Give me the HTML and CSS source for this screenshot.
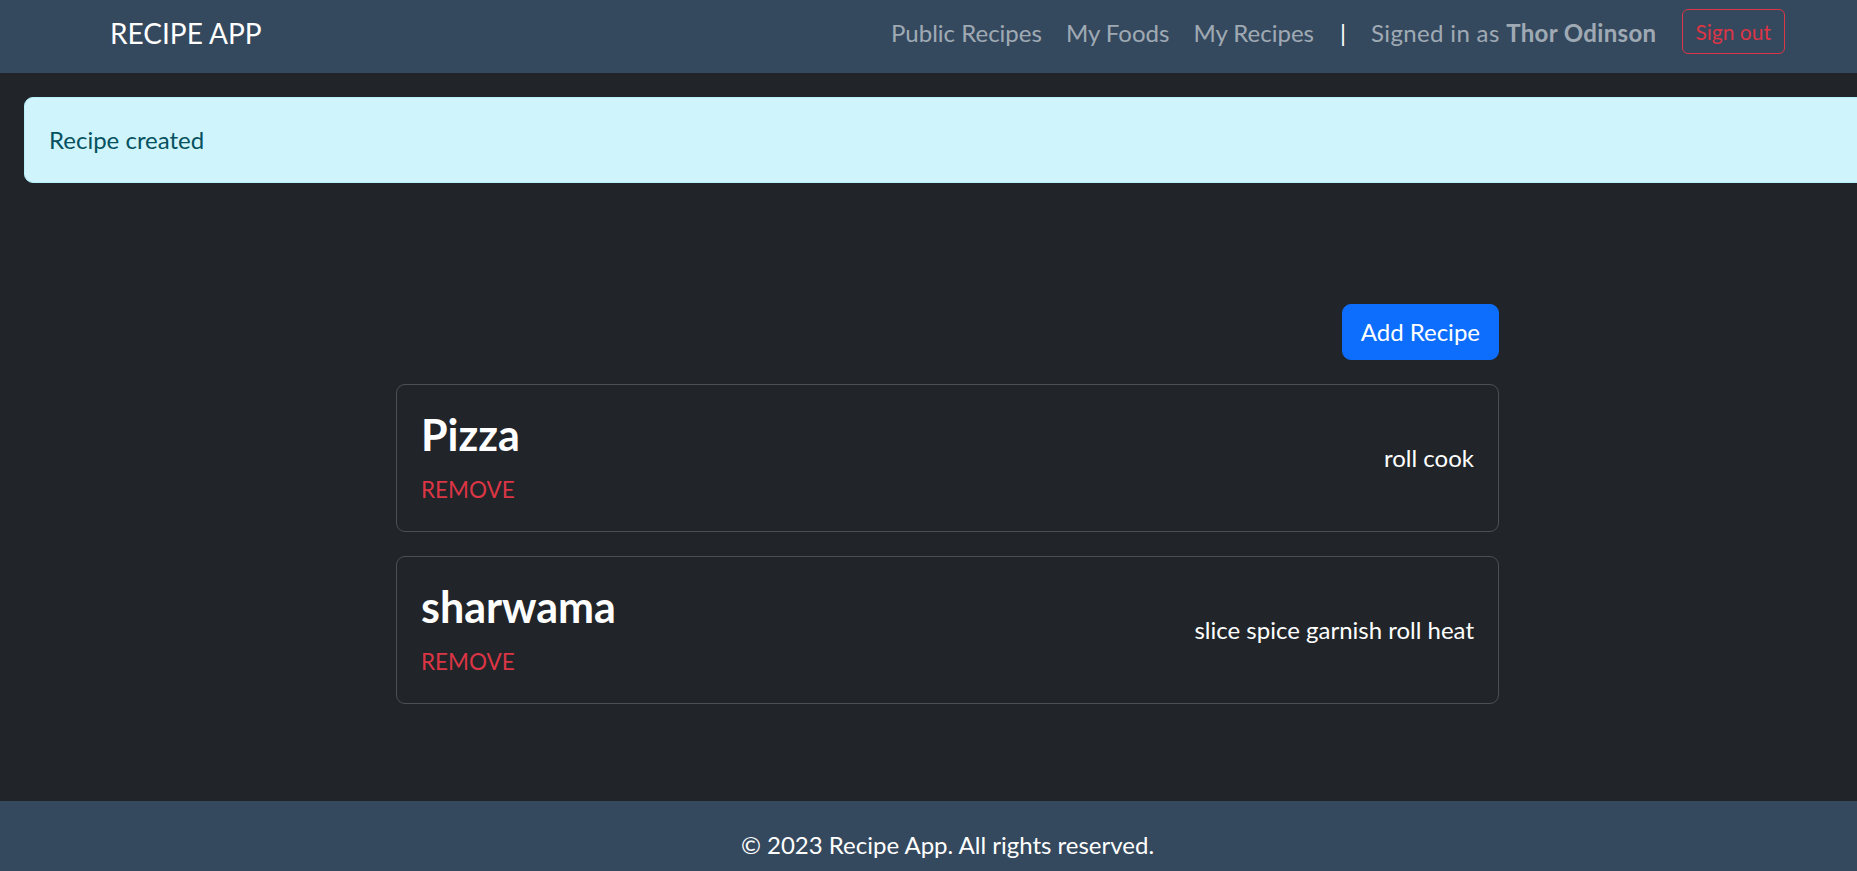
FILE: index.html
```html
<!DOCTYPE html>
<html lang="en">
<head>
<meta charset="utf-8">
<title>Recipe App</title>
<link rel="stylesheet" href="styles.css">
</head>
<body>
<div class="page">
  <header class="navbar">
    <a class="brand" href="#">RECIPE APP</a>
    <nav class="nav-right">
      <a class="nav-link" href="#">Public Recipes</a>
      <a class="nav-link" href="#">My Foods</a>
      <a class="nav-link" href="#">My Recipes</a>
      <span class="nav-sep">|</span>
      <span class="nav-user">Signed in as <strong>Thor Odinson</strong></span>
      <button class="btn-signout" type="button">Sign out</button>
    </nav>
  </header>

  <div class="alert">Recipe created</div>

  <main class="recipes">
    <div class="toolbar">
      <a class="btn-add" href="#">Add Recipe</a>
    </div>

    <div class="card">
      <div class="card-main">
        <h2 class="card-title">Pizza</h2>
        <a class="remove" href="#">REMOVE</a>
      </div>
      <p class="card-desc">roll cook</p>
    </div>

    <div class="card">
      <div class="card-main">
        <h2 class="card-title">sharwama</h2>
        <a class="remove" href="#">REMOVE</a>
      </div>
      <p class="card-desc">slice spice garnish roll heat</p>
    </div>
  </main>

  <footer class="footer">© 2023 Recipe App. All rights reserved.</footer>
</div>
</body>
</html>
```
FILE: styles.css
```css
html, body {
  margin: 0;
  padding: 0;
  overflow: hidden;
  background: #212529;
}

body {
  font-family: "Lato", "Liberation Sans", sans-serif;
  font-size: 24px;
  line-height: 1.5;
  color: #dee2e6;
}

.page {
  width: 1895px;
}

a { text-decoration: none; }

/* Navbar */
.navbar {
  box-sizing: border-box;
  height: 73px;
  padding: 0 110px 8px 110px;
  background: #34495e;
  display: flex;
  align-items: center;
  justify-content: space-between;
}

.brand {
  color: #fff;
  font-size: 28px;
  line-height: 42px;
}

.nav-right {
  display: flex;
  align-items: center;
}

.nav-link {
  color: rgba(255, 255, 255, 0.55);
  padding: 0 12px;
  line-height: 36px;
}

.nav-sep {
  color: #fff;
  margin: 0 25px 0 14px;
  line-height: 36px;
}

.nav-user {
  color: rgba(255, 255, 255, 0.55);
  letter-spacing: 0.35px;
  line-height: 36px;
  margin-right: 25px;
}

.nav-user strong {
  font-weight: 700;
}

.btn-signout {
  font-family: inherit;
  font-size: 21px;
  line-height: 31.5px;
  padding: 6px 13px;
  background: transparent;
  color: #dc3545;
  border: 1px solid #dc3545;
  border-radius: 6px;
  position: relative;
  top: -1px;
}

/* Alert */
.alert {
  margin: 24px 24px 0 24px;
  padding: 24px;
  background: #cff4fc;
  border: 1px solid #b6effb;
  border-radius: 9px;
  color: #055160;
  line-height: 36px;
}

/* Recipes */
.recipes {
  width: 1103px;
  margin: 0 auto;
  padding: 121px 0 97px;
  display: flex;
  flex-direction: column;
  gap: 24px;
}

.toolbar {
  display: flex;
  justify-content: flex-end;
}

.btn-add {
  display: block;
  background: #0d6efd;
  color: #fff;
  border: 1px solid #0d6efd;
  border-radius: 9px;
  padding: 9px 18px;
  line-height: 36px;
}

.card {
  border: 1px solid #495057;
  border-radius: 9px;
  padding: 24px;
  display: flex;
  justify-content: space-between;
  align-items: center;
}

.card-main {
  display: flex;
  flex-direction: column;
  align-items: flex-start;
}

.card-title {
  margin: 0 0 11px;
  font-size: 43px;
  font-weight: 700;
  line-height: 52px;
  color: #fff;
}

.remove {
  color: #dc3545;
  font-size: 22.5px;
  line-height: 35px;
}

.card-desc {
  margin: 0;
  color: #fff;
  line-height: 36px;
}

/* Footer */
.footer {
  background: #34495e;
  color: #fff;
  text-align: center;
  font-size: 24px;
  line-height: 36px;
  padding: 26px 0;
}
```
